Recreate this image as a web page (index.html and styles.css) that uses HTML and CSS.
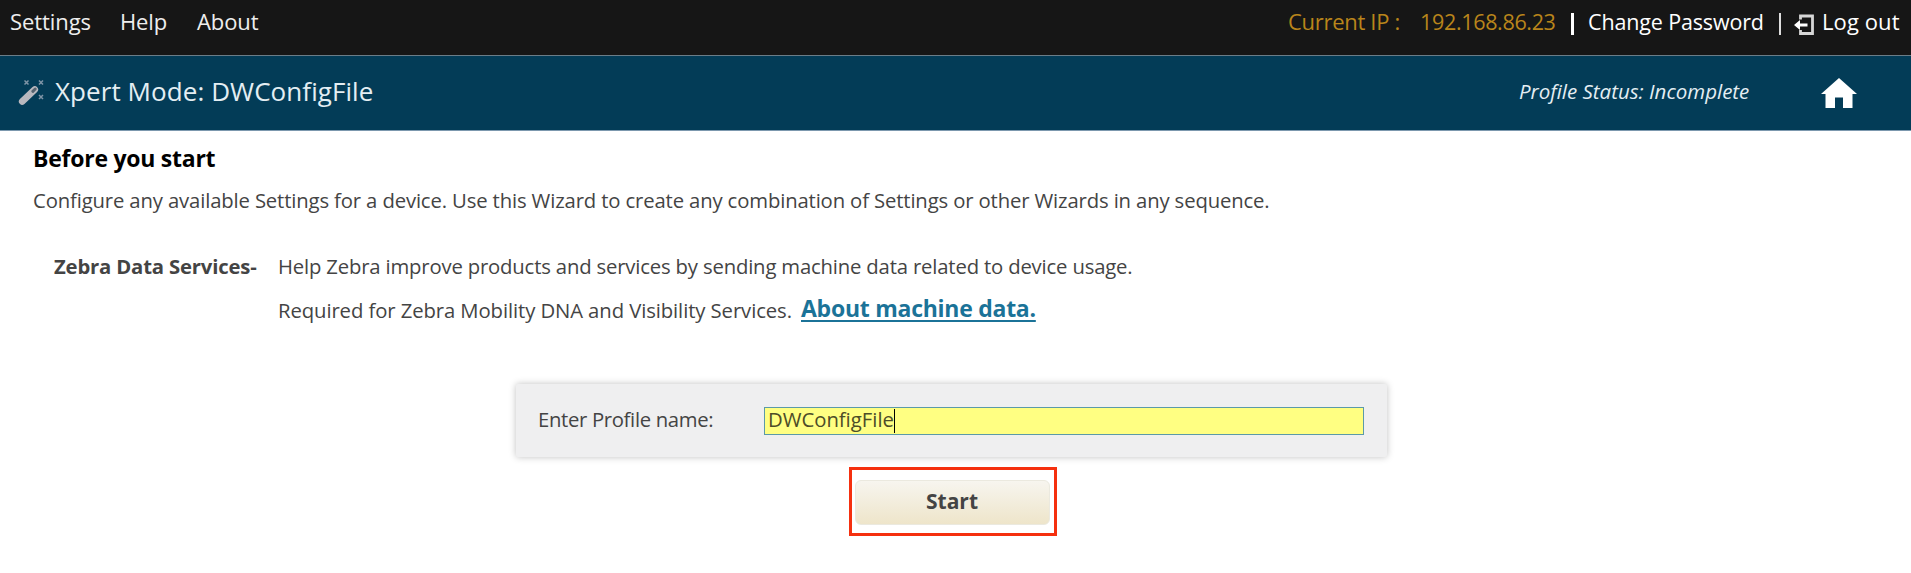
FILE: index.html
```html
<!DOCTYPE html>
<html lang="en">
<head>
<meta charset="utf-8">
<title>Xpert Mode</title>
<link rel="stylesheet" href="styles.css">
</head>
<body>
<nav class="topbar">
  <div class="menu"><a class="m-settings">Settings</a><a class="m-help">Help</a><a class="m-about">About</a></div>
  <div class="session">
    <span class="ip-label">Current IP :</span>
    <span class="ip-value">192.168.86.23</span>
    <span class="bar bar-thick"></span>
    <a class="change">Change Password</a>
    <span class="bar"></span>
    <svg class="exit" viewBox="0 0 21 22"><path d="M6.500 5.500V2H18.500V19.500H6.500V16" fill="none" stroke="#d6d6d6" stroke-width="2.800"/><path d="M0 11L6 6V9.600H13.500V12.600H6V16Z" fill="#fff"/></svg>
    <a class="logout">Log out</a>
  </div>
</nav>
<header class="titlebar">
  <svg class="wand" viewBox="0 0 28 28">
    <path d="M4.200 22.500L16.800 10.500" stroke="#b9b8be" stroke-width="6.600" stroke-linecap="round"/>
    <path d="M14.800 12.300L17.200 10" stroke="#56636f" stroke-width="3" stroke-linecap="round"/>
    <g stroke="#7f95a7" stroke-width="1.500"><path d="M6.500 1.500l4 4m0-4l-4 4M21 1.500l4 4m0-4l-4 4M21 16l4 4m0-4l-4 4"/></g>
  </svg>
  <h1 class="title">Xpert Mode: DWConfigFile</h1>
  <span class="status">Profile Status: Incomplete</span>
  <svg class="home" viewBox="0 0 36 30"><path d="M18 0L36 16H31.500V30H22V19.500H14V30H4.500V16H0Z" fill="#fff"/></svg>
</header>
<main class="content">
  <h2 class="heading">Before you start</h2>
  <p class="intro">Configure any available Settings for a device. Use this Wizard to create any combination of Settings or other Wizards in any sequence.</p>
  <section class="services">
    <b class="services-name">Zebra Data Services-</b>
    <div class="services-text">
      <p class="help">Help Zebra improve products and services by sending machine data related to device usage.</p>
      <p class="required"><span>Required for Zebra Mobility DNA and Visibility Services.</span><a class="about-data">About machine data.</a></p>
    </div>
  </section>
  <form class="card">
    <label class="label">Enter Profile name:</label>
    <div class="field"><span>DWConfigFile</span><i class="caret"></i></div>
  </form>
  <div class="highlight"><button class="start" type="button">Start</button></div>
</main>
</body>
</html>
```
FILE: styles.css
```css
* { box-sizing: border-box; }
body {
  margin: 0;
  font-family: "Open Sans", sans-serif;
  font-size: 20.3px;
  color: #444;
  background: #fff;
  white-space: nowrap;
}
p, h1, h2 { margin: 0; font-weight: 400; }
svg { display: block; flex: none; }

.topbar {
  display: flex;
  justify-content: space-between;
  height: 55px;
  line-height: 43px;
  font-size: 22px;
  background: #161616;
  color: #eee;
}
.menu { display: flex; padding-left: 10px; }
.m-settings { width: 110px; letter-spacing: -0.07px; }
.m-help { width: 77px; letter-spacing: -0.1px; }
.m-about { letter-spacing: -0.1px; }
.session { display: flex; width: 623px; color: #fff; }
.ip-label { width: 132px; color: #b9851b; letter-spacing: -0.3px; }
.ip-value { width: 151px; color: #b9851b; font-size: 21.5px; letter-spacing: -0.33px; }
.bar { width: 2px; height: 22px; margin-top: 13px; background: #ddd; }
.bar-thick { width: 3px; background: #fff; }
.change { width: 205px; padding-left: 14px; font-size: 21.5px; letter-spacing: -0.15px; }
.exit { width: 21px; height: 22px; margin: 13.5px 7px 0 13px; }
.logout { letter-spacing: 0.1px; }

.titlebar {
  display: flex;
  height: 76px;
  line-height: 70px;
  background: #033c57;
  color: #e4eef3;
  border-top: 1px solid #6b7d88;
  border-bottom: 1px solid #7c98ae;
}
.wand { width: 28px; height: 28px; margin: 23px 9px 0 18px; }
.title { width: 1464px; font-size: 26px; letter-spacing: 0.07px; }
.status { width: 302px; font-size: 20.5px; font-style: italic; }
.home { width: 36px; height: 30px; margin-top: 22px; }

.heading {
  padding-left: 33px;
  font-size: 23px;
  font-weight: 700;
  line-height: 54px;
  color: #000;
  letter-spacing: -0.25px;
}
.intro { padding-left: 33px; line-height: 30px; letter-spacing: -0.14px; }
.services { display: flex; padding: 29px 0 0 54px; line-height: 44px; }
.services-name { width: 224px; font-weight: 700; letter-spacing: -0.17px; }
.help { letter-spacing: -0.17px; }
.required { display: flex; letter-spacing: -0.09px; }
.required span { width: 523px; }
.about-data {
  height: 44px;
  line-height: 41px;
  font-size: 23px;
  font-weight: 700;
  color: #1b7398;
  letter-spacing: -0.26px;
  text-decoration: underline;
  text-decoration-thickness: 1.5px;
  text-underline-offset: 3px;
}

.card {
  display: flex;
  width: 871px;
  height: 73px;
  margin: 52px 0 0 516px;
  padding-left: 22px;
  line-height: 70px;
  background: #efeff0;
  border-radius: 2px;
  box-shadow: 0 0 7px rgba(0, 0, 0, 0.25);
}
.label { width: 226px; letter-spacing: -0.33px; }
.field {
  display: flex;
  width: 600px;
  height: 28px;
  margin-top: 23px;
  padding-left: 3px;
  line-height: 22px;
  background: #ffff82;
  border: 1px solid #5b9aa8;
  color: #4d4d28;
}
.caret { width: 1px; height: 24px; margin-top: 1px; background: #000; }

.highlight {
  display: flex;
  width: 208px;
  height: 69px;
  margin: 10px 0 0 848.5px;
  padding: 10px 0 0 3px;
  border: 3px solid #f5300f;
}
.start {
  width: 195px;
  height: 45px;
  padding: 0 0 4px;
  font: 700 21px/34px "Open Sans", sans-serif;
  color: #444;
  letter-spacing: 0;
  background: linear-gradient(#f7f5ef, #eee5ca);
  border: 1px solid #ebe9df;
  border-radius: 6px;
}
```
